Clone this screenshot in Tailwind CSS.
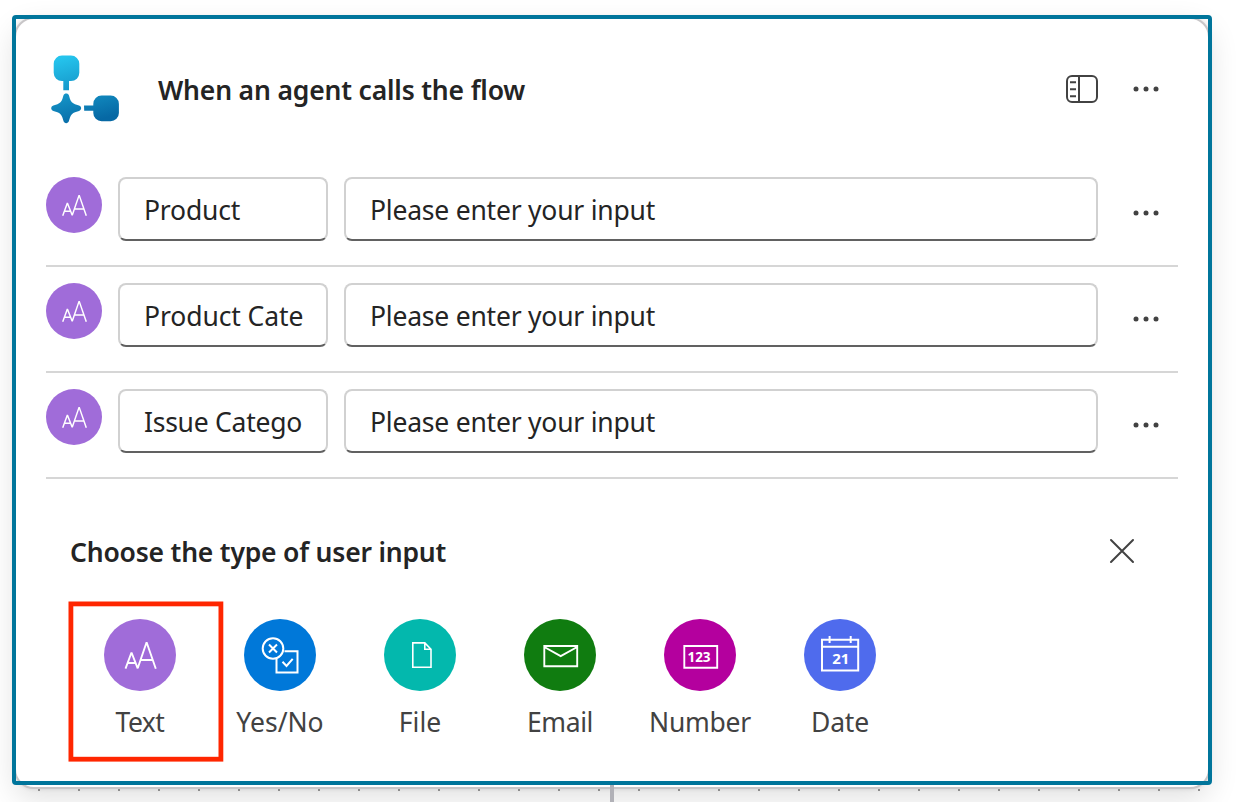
<!DOCTYPE html>
<html lang="en">
<head>
<meta charset="utf-8">
<title>When an agent calls the flow</title>
<script src="https://cdn.jsdelivr.net/npm/@tailwindcss/browser@4"></script>
</head>
<body class="relative h-[802px] w-[1236px] overflow-hidden bg-white font-['Noto_Sans','Open_Sans',sans-serif] text-[26.5px] leading-9 text-[#242424]">
<svg class="hidden">
  <symbol id="dots" viewBox="0 0 28 6"><g fill="#424242"><circle cx="3" cy="3" r="2.5"/><circle cx="13" cy="3" r="2.5"/><circle cx="23" cy="3" r="2.5"/></g></symbol>
  <symbol id="aa" viewBox="0 0 72 72"><g fill="none" stroke="#fff" stroke-width="1.9"><path d="M21.5 49.7 27.5 33.5 33.7 49.3 42.6 23.3 51.8 49.7M23.3 44H31.6M36.2 41H48.8" stroke-linejoin="bevel"/></g></symbol>
</svg>

<main class="relative ml-[14px] mt-[17px] h-[772px] w-[1196px] rounded-[20px] border-2 border-[#c8c6c8] bg-white shadow-[0_0_4px_rgba(0,0,0,0.10),0_10px_30px_rgba(0,0,0,0.12)]">
  <header class="flex h-[142px] items-center pl-[34px]">
    <svg class="h-[72px] w-[72px] shrink-0" viewBox="50 54.5 72 72">
      <defs><linearGradient id="flow" gradientUnits="userSpaceOnUse" x1="70" y1="56" x2="88" y2="123"><stop stop-color="#25c4ed"/><stop offset="1" stop-color="#0668a4"/></linearGradient></defs>
      <g fill="url(#flow)">
        <path d="M62 56h9a8.300 8.300 0 0 1 8.300 8.300v9a8.300 8.300 0 0 1-8.300 8.300h-2v9.200h-5.700v-9.200H62a8.300 8.300 0 0 1-8.300-8.300v-9A8.300 8.300 0 0 1 62 56Z"/>
        <path d="M84 106h9.300v-1.500a8.300 8.300 0 0 1 8.300-8.400h9a8.300 8.300 0 0 1 8.300 8.300v9a8.300 8.300 0 0 1-8.300 8.300h-9a8.300 8.300 0 0 1-8.300-8.300V111.200H84.200Z"/>
        <path d="M63.500 95.800C64.300 93.500 68.100 93.500 68.900 95.800L70 99.500C70.800 101.900 72.600 103.800 75 104.700L79 106C81.900 107 81.900 110.400 79 111.400L75 112.700C72.600 113.600 70.800 115.500 70 117.900L68.900 121.600C68.100 124.300 64.300 124.300 63.500 121.600L62.400 117.900C61.600 115.500 59.800 113.600 57.400 112.700L53.400 111.400C50.500 110.400 50.500 107 53.400 106L57.400 104.700C59.800 103.800 61.600 101.900 62.400 99.500Z"/>
      </g>
    </svg>
    <h1 class="ml-[36px] w-[907px] shrink-0 whitespace-nowrap pb-px font-semibold tracking-[-0.17px]">When an agent calls the flow</h1>
    <svg class="h-8 w-[34px] shrink-0 -mt-1" viewBox="0 0 34 32" fill="none" stroke="#424242" stroke-width="2"><rect x="2" y="4" width="30" height="26" rx="5"/><path d="M14 4V30M5 10.200H11M5 17.200H11M5 24.200H11"/></svg>
    <svg class="ml-[34px] h-[6px] w-7 shrink-0 -mt-[2px]"><use href="#dots"/></svg>
  </header>

  <section class="ml-[30px] w-[1132px]">
    <div class="flex h-[106px] items-start border-b-2 border-[#d6d6d6] pt-[16px]">
      <svg class="h-14 w-14 rounded-full bg-[#a06cd9]"><use href="#aa"/></svg>
      <div class="ml-4 flex h-16 w-[210px] items-center rounded-lg border-2 border-[#d1d1d1] border-b-[#616161] pl-6 pt-px"><span class="whitespace-nowrap tracking-[-0.2px]">Product</span></div>
      <div class="ml-4 flex h-16 w-[754px] items-center rounded-lg border-2 border-[#d1d1d1] border-b-[#616161] px-6 pt-px"><span class="whitespace-nowrap tracking-[-0.22px]">Please enter your input</span></div>
      <svg class="ml-[35px] mt-[33px] h-[6px] w-7"><use href="#dots"/></svg>
    </div>
    <div class="flex h-[106px] items-start border-b-2 border-[#d6d6d6] pt-[16px]">
      <svg class="h-14 w-14 rounded-full bg-[#a06cd9]"><use href="#aa"/></svg>
      <div class="ml-4 flex h-16 w-[210px] items-center rounded-lg border-2 border-[#d1d1d1] border-b-[#616161] pl-6 pt-px"><span class="whitespace-nowrap tracking-[-0.1px]">Product Cate</span></div>
      <div class="ml-4 flex h-16 w-[754px] items-center rounded-lg border-2 border-[#d1d1d1] border-b-[#616161] px-6 pt-px"><span class="whitespace-nowrap tracking-[-0.22px]">Please enter your input</span></div>
      <svg class="ml-[35px] mt-[33px] h-[6px] w-7"><use href="#dots"/></svg>
    </div>
    <div class="flex h-[106px] items-start border-b-2 border-[#d6d6d6] pt-[16px]">
      <svg class="h-14 w-14 rounded-full bg-[#a06cd9]"><use href="#aa"/></svg>
      <div class="ml-4 flex h-16 w-[210px] items-center rounded-lg border-2 border-[#d1d1d1] border-b-[#616161] pl-6 pt-px"><span class="whitespace-nowrap tracking-[-0.25px]">Issue Catego</span></div>
      <div class="ml-4 flex h-16 w-[754px] items-center rounded-lg border-2 border-[#d1d1d1] border-b-[#616161] px-6 pt-px"><span class="whitespace-nowrap tracking-[-0.22px]">Please enter your input</span></div>
      <svg class="ml-[35px] mt-[33px] h-[6px] w-7"><use href="#dots"/></svg>
    </div>
  </section>

  <section class="ml-[54px] pt-[55px]">
    <div class="flex items-center">
      <h2 class="w-[1038px] whitespace-nowrap font-semibold tracking-[-0.2px]">Choose the type of user input</h2>
      <svg class="h-7 w-7 -mt-[3px]" viewBox="0 0 28 28" stroke="#424242" stroke-width="2" stroke-linecap="round"><path d="M3 3 25 25M25 3 3 25"/></svg>
    </div>
    <div class="mt-[49px] flex text-[#424242]">
      <div class="flex w-[140px] flex-col items-center gap-[13px]">
        <svg class="h-[72px] w-[72px] rounded-full bg-[#a06cd9]"><use href="#aa"/></svg><span class="tracking-[-0.5px]">Text</span>
      </div>
      <div class="flex w-[140px] flex-col items-center gap-[13px]">
        <svg class="h-[72px] w-[72px] rounded-full bg-[#0078d9]" fill="none" stroke="#fff" stroke-width="2"><circle cx="29" cy="29.500" r="10.300"/><path d="M25 25.500 33 33.500M33 25.500 25 33.500M40.500 32.200H53.500V53.500H32.500V40M38.500 42.800 42.500 47 48.700 39.800"/></svg><span>Yes/No</span>
      </div>
      <div class="flex w-[140px] flex-col items-center gap-[13px]">
        <svg class="h-[72px] w-[72px] rounded-full bg-[#03b8ad]" fill="none" stroke="#fff" stroke-width="1.600"><path d="M28.800 23.900H40.800L47 30.300V48.200H28.800ZM40.800 24V30.300H47"/></svg><span>File</span>
      </div>
      <div class="flex w-[140px] flex-col items-center gap-[13px]">
        <svg class="h-[72px] w-[72px] rounded-full bg-[#107c10]" fill="none" stroke="#fff" stroke-width="1.900"><path d="M20.300 27H53.200V47.200H20.300ZM20.300 28 36.700 37.200 53.200 28"/></svg><span class="tracking-[-0.4px]">Email</span>
      </div>
      <div class="flex w-[140px] flex-col items-center gap-[13px]">
        <svg class="h-[72px] w-[72px] rounded-full bg-[#b4009e]"><path d="M20.300 27H53.200V48.700H20.300Z" fill="none" stroke="#fff" stroke-width="1.900"/><text x="35" y="43" text-anchor="middle" fill="#fff" font-size="13.500" font-weight="700" textLength="23">123</text></svg><span class="tracking-[-0.25px]">Number</span>
      </div>
      <div class="flex w-[140px] flex-col items-center gap-[13px]">
        <svg class="h-[72px] w-[72px] rounded-full bg-[#4f6bed]"><path d="M18 20.800H54.200V51.500H18ZM18 27.700H54.200M25.600 17V24M46.700 17V24" fill="none" stroke="#fff" stroke-width="2"/><text x="36.800" y="45" text-anchor="middle" fill="#fff" font-size="15" font-weight="700">21</text></svg><span class="tracking-[-0.2px]">Date</span>
      </div>
    </div>
  </section>
</main>

<!-- canvas grid dots and connector -->
<div class="absolute left-0 top-[789px] h-[2px] w-full bg-[repeating-linear-gradient(90deg,transparent_0_38px,#8c8c8c_38px_40px)]"></div>
<div class="absolute left-[610px] top-[785px] h-[17px] w-1 bg-[#b1b1b7]"></div>
<!-- selection outline -->
<div class="absolute left-[12px] top-[15px] h-[770px] w-[1200px] rounded-[4px] border-4 border-[#00759b]"></div>
<!-- highlight -->
<svg class="absolute left-[68px] top-[601px] h-[161px] w-[156px]"><rect x="2.900" y="2.900" width="150" height="155.300" fill="none" stroke="#ff2600" stroke-width="4.800"/></svg>
</body>
</html>
